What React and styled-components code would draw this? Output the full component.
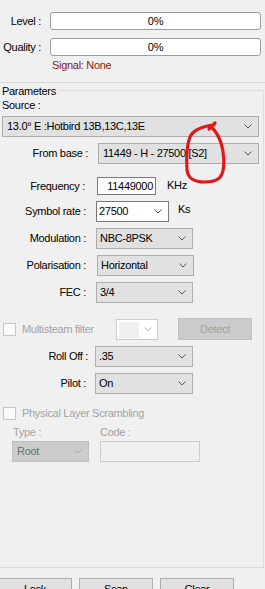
import React from 'react';
import styled, { createGlobalStyle } from 'styled-components';

const GlobalStyle = createGlobalStyle`
  html, body {
    margin: 0;
    padding: 0;
    background: #f0f0f0;
  }
`;

const Page = styled.div`
  position: relative;
  width: 265px;
  height: 589px;
  overflow: hidden;
  background: #f0f0f0;
  color: #000;
  font-family: "Liberation Sans", Arial, sans-serif;
  font-size: 11px;
  line-height: 13px;
  letter-spacing: -0.3px;
`;

// signal meters at the top
const TopPanel = styled.div`
  box-sizing: border-box;
  height: 83px;
  padding-top: 12px;
  border-bottom: 1px solid #d9d9d9;
`;

const MeterRow = styled.div`
  display: grid;
  grid-template-columns: 41px 211px;
  column-gap: 9px;
  align-items: center;
  height: 18px;
  margin-top: ${(p) => p.$top || 0}px;
`;

const Label = styled.div`
  text-align: right;
  white-space: nowrap;
`;

const Meter = styled.div`
  box-sizing: border-box;
  height: 18px;
  border: 1px solid #9d9d9d;
  border-radius: 3px;
  background: #fff;
  display: flex;
  align-items: center;
  justify-content: center;
`;

const Signal = styled.div`
  margin: 3px 0 0 52px;
  color: #8b1a1a;
`;

// "Parameters" group box
const GroupBox = styled.div`
  box-sizing: border-box;
  width: 264px;
  height: 478px;
  margin-top: 7px;
  border: 1px solid #dcdcdc;
  border-left: none;
  display: flex;
  flex-direction: column;
`;

const Title = styled.div`
  align-self: flex-start;
  margin-top: -6px;
  padding: 0 2px;
  background: #f0f0f0;
`;

const Caption = styled.div`
  margin: ${(p) => p.$top || 0}px 0 0 ${(p) => p.$left || 0}px;
  color: ${(p) => (p.$disabled ? '#a3a3a3' : '#000')};
  white-space: nowrap;
`;

const FieldRow = styled.div`
  display: flex;
  align-items: center;
  height: ${(p) => p.$h || 21}px;
  margin-top: ${(p) => p.$top || 0}px;

  & > ${Label} {
    width: ${(p) => p.$label || 86}px;
    margin-right: ${(p) => p.$gap || 10}px;
  }
`;

const Combo = styled.div`
  box-sizing: border-box;
  width: ${(p) => p.$w}px;
  height: 21px;
  margin-left: ${(p) => p.$left || 0}px;
  padding: 0 6px 0 ${(p) => p.$pad ?? 3}px;
  display: flex;
  align-items: center;
  justify-content: space-between;
  white-space: nowrap;
  background: ${(p) =>
    p.$kind === 'edit' ? '#fff' : p.$kind === 'off' ? '#cccccc' : '#e1e1e1'};
  border: 1px solid
    ${(p) =>
      p.$kind === 'edit' ? '#7a7a7a' : p.$kind === 'off' ? '#bfbfbf' : '#adadad'};
  color: ${(p) => (p.$kind === 'off' ? '#6d6d6d' : '#000')};
`;

const TextBox = styled.div`
  box-sizing: border-box;
  width: ${(p) => p.$w}px;
  height: ${(p) => p.$h || 18}px;
  padding-right: 2px;
  display: flex;
  align-items: center;
  justify-content: flex-end;
  background: ${(p) => (p.$off ? '#f0f0f0' : '#fff')};
  border: 1px solid ${(p) => (p.$off ? '#cccccc' : '#7a7a7a')};
`;

const Unit = styled.span`
  align-self: flex-start;
  margin: 2px 0 0 ${(p) => p.$left}px;
`;

const CheckGroup = styled.div`
  display: flex;
  align-items: center;
  width: ${(p) => p.$w || 'auto'};
  color: #a3a3a3;
`;

const Check = styled.span`
  box-sizing: border-box;
  width: 13px;
  height: 13px;
  margin: 0 6px 0 3px;
  border: 1px solid #c6c6c6;
  background: #fbfbfb;
`;

const MiniCombo = styled.div`
  box-sizing: border-box;
  width: 42px;
  height: 21px;
  margin-top: 1px;
  padding: 0 5px 0 2px;
  display: flex;
  align-items: center;
  justify-content: space-between;
  background: #fff;
  border: 1px solid #cccccc;
`;

const Swatch = styled.span`
  width: 20px;
  height: 16px;
  background: #f0f0f0;
`;

const Button = styled.div`
  box-sizing: border-box;
  width: 74px;
  height: ${(p) => p.$h || 23}px;
  margin-left: ${(p) => p.$left || 0}px;
  display: flex;
  align-items: center;
  justify-content: center;
  background: ${(p) => (p.$off ? '#cccccc' : '#e1e1e1')};
  border: 1px solid ${(p) => (p.$off ? '#bfbfbf' : '#adadad')};
  color: ${(p) => (p.$off ? '#a3a3a3' : '#000')};
`;

const PlsGrid = styled.div`
  display: grid;
  grid-template-columns: 77px 100px;
  column-gap: 11px;
  row-gap: 2px;
  margin: 6px 0 0 12px;
  color: #a3a3a3;
`;

const ButtonBar = styled.div`
  display: flex;
  gap: 7px;
  margin: 10px 0 0 -2px;
`;

const Overlay = styled.svg`
  position: absolute;
  top: 0;
  left: 0;
  pointer-events: none;
`;

const Chevron = ({ color = '#555' }) => (
  <svg width="8" height="5" viewBox="0 0 8 5">
    <path d="M0.5 0.5 L4 4 L7.5 0.5" fill="none" stroke={color} strokeWidth="1" />
  </svg>
);

export default function App() {
  return (
    <Page>
      <GlobalStyle />
      <TopPanel>
        <MeterRow>
          <Label>Level :</Label>
          <Meter>0%</Meter>
        </MeterRow>
        <MeterRow $top={8}>
          <Label>Quality :</Label>
          <Meter>0%</Meter>
        </MeterRow>
        <Signal>Signal: None</Signal>
      </TopPanel>

      <GroupBox>
        <Title>Parameters</Title>
        <Caption $top={1} $left={2}>Source :</Caption>
        <FieldRow $top={4}>
          <Combo $w={257} $left={2} $pad={4}>
            <span>13.0° E :Hotbird 13B,13C,13E</span>
            <Chevron />
          </Combo>
        </FieldRow>
        <FieldRow $top={6} $label={88}>
          <Label>From base :</Label>
          <Combo $w={161} $pad={4}>
            <span>11449 - H - 27500 [S2]</span>
            <Chevron />
          </Combo>
        </FieldRow>
        <FieldRow $top={13} $h={18} $label={85} $gap={12}>
          <Label>Frequency :</Label>
          <TextBox $w={59}>11449000</TextBox>
          <Unit $left={11}>KHz</Unit>
        </FieldRow>
        <FieldRow $top={6}>
          <Label>Symbol rate :</Label>
          <Combo $w={73} $kind="edit" $pad={2}>
            <span>27500</span>
            <Chevron />
          </Combo>
          <Unit $left={9}>Ks</Unit>
        </FieldRow>
        <FieldRow $top={6}>
          <Label>Modulation :</Label>
          <Combo $w={97}>
            <span>NBC-8PSK</span>
            <Chevron />
          </Combo>
        </FieldRow>
        <FieldRow $top={6} $gap={11}>
          <Label>Polarisation :</Label>
          <Combo $w={97}>
            <span>Horizontal</span>
            <Chevron />
          </Combo>
        </FieldRow>
        <FieldRow $top={6}>
          <Label>FEC :</Label>
          <Combo $w={97}>
            <span>3/4</span>
            <Chevron />
          </Combo>
        </FieldRow>

        <FieldRow $top={15} $h={22}>
          <CheckGroup $w="116px">
            <Check />
            <span>Multisteam filter</span>
          </CheckGroup>
          <MiniCombo>
            <Swatch />
            <Chevron color="#b4b4b4" />
          </MiniCombo>
          <Button $off $h={22} $left={20}>Detect</Button>
        </FieldRow>

        <FieldRow $top={6} $label={88} $gap={7}>
          <Label>Roll Off :</Label>
          <Combo $w={98}>
            <span>.35</span>
            <Chevron />
          </Combo>
        </FieldRow>
        <FieldRow $top={6} $gap={9}>
          <Label>Pilot :</Label>
          <Combo $w={98}>
            <span>On</span>
            <Chevron />
          </Combo>
        </FieldRow>

        <FieldRow $top={12} $h={14}>
          <CheckGroup>
            <Check />
            <span>Physical Layer Scrambling</span>
          </CheckGroup>
        </FieldRow>
        <PlsGrid>
          <Caption $left={1} $disabled>Type :</Caption>
          <Caption $disabled>Code :</Caption>
          <Combo $w={77} $kind="off" $pad={4}>
            <span>Root</span>
            <Chevron color="#a8a8a8" />
          </Combo>
          <TextBox $w={100} $h={21} $off />
        </PlsGrid>
      </GroupBox>

      <ButtonBar>
        <Button>Lock</Button>
        <Button>Scan</Button>
        <Button>Clear</Button>
      </ButtonBar>

      <Overlay width="265" height="589" viewBox="0 0 265 589">
        <path
          d="M214 125 C 205 126, 195 129, 191 135 C 187 142, 186 158, 187 170 C 188 178, 193 182, 205 182 C 214 182, 220 179, 222 174 C 225 166, 224 152, 221 143 C 219 137, 216 131, 211 127 M 209 129 L 215 123"
          fill="none"
          stroke="#e3161b"
          strokeWidth="3.2"
          strokeLinecap="round"
          strokeLinejoin="round"
        />
      </Overlay>
    </Page>
  );
}
